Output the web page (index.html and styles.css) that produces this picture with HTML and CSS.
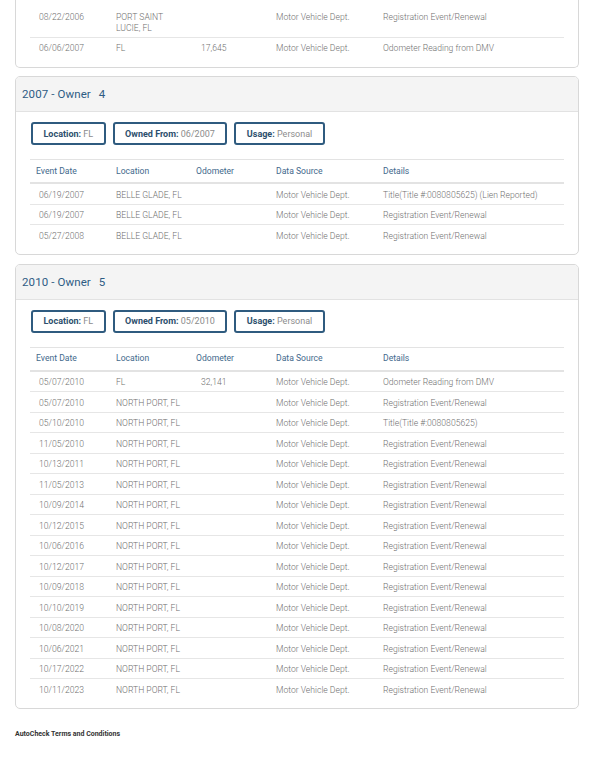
FILE: index.html
```html
<!DOCTYPE html>
<html>
<head>
<meta charset="utf-8">
<link rel="stylesheet" href="styles.css">
</head>
<body>
<div class="page">
  <section class="card card-cut">
    <div class="card-body card-body-cut">
      <table class="events">
        <colgroup><col class="c1"><col class="c2"><col class="c3"><col class="c4"><col class="c5"></colgroup>
        <tbody>
          <tr><td class="date">08/22/2006</td><td>PORT SAINT LUCIE, FL</td><td class="odo"></td><td>Motor Vehicle Dept.</td><td>Registration Event/Renewal</td></tr>
          <tr><td class="date">06/06/2007</td><td>FL</td><td class="odo">17,645</td><td>Motor Vehicle Dept.</td><td>Odometer Reading from DMV</td></tr>
        </tbody>
      </table>
    </div>
  </section>

  <section class="card">
    <header class="card-head"><h2 class="owner-title">2007 - Owner <span class="owner-num">4</span></h2></header>
    <div class="card-body">
      <div class="badges">
        <span class="badge"><b>Location:</b> FL</span>
        <span class="badge"><b>Owned From:</b> 06/2007</span>
        <span class="badge"><b>Usage:</b> Personal</span>
      </div>
      <table class="events">
        <colgroup><col class="c1"><col class="c2"><col class="c3"><col class="c4"><col class="c5"></colgroup>
        <thead><tr><th>Event Date</th><th>Location</th><th>Odometer</th><th>Data Source</th><th>Details</th></tr></thead>
        <tbody>
          <tr><td class="date">06/19/2007</td><td>BELLE GLADE, FL</td><td class="odo"></td><td>Motor Vehicle Dept.</td><td>Title(Title #:0080805625) (Lien Reported)</td></tr>
          <tr><td class="date">06/19/2007</td><td>BELLE GLADE, FL</td><td class="odo"></td><td>Motor Vehicle Dept.</td><td>Registration Event/Renewal</td></tr>
          <tr><td class="date">05/27/2008</td><td>BELLE GLADE, FL</td><td class="odo"></td><td>Motor Vehicle Dept.</td><td>Registration Event/Renewal</td></tr>
        </tbody>
      </table>
    </div>
  </section>

  <section class="card">
    <header class="card-head"><h2 class="owner-title">2010 - Owner <span class="owner-num">5</span></h2></header>
    <div class="card-body">
      <div class="badges">
        <span class="badge"><b>Location:</b> FL</span>
        <span class="badge"><b>Owned From:</b> 05/2010</span>
        <span class="badge"><b>Usage:</b> Personal</span>
      </div>
      <table class="events">
        <colgroup><col class="c1"><col class="c2"><col class="c3"><col class="c4"><col class="c5"></colgroup>
        <thead><tr><th>Event Date</th><th>Location</th><th>Odometer</th><th>Data Source</th><th>Details</th></tr></thead>
        <tbody>
          <tr><td class="date">05/07/2010</td><td>FL</td><td class="odo">32,141</td><td>Motor Vehicle Dept.</td><td>Odometer Reading from DMV</td></tr>
          <tr><td class="date">05/07/2010</td><td>NORTH PORT, FL</td><td class="odo"></td><td>Motor Vehicle Dept.</td><td>Registration Event/Renewal</td></tr>
          <tr><td class="date">05/10/2010</td><td>NORTH PORT, FL</td><td class="odo"></td><td>Motor Vehicle Dept.</td><td>Title(Title #:0080805625)</td></tr>
          <tr><td class="date">11/05/2010</td><td>NORTH PORT, FL</td><td class="odo"></td><td>Motor Vehicle Dept.</td><td>Registration Event/Renewal</td></tr>
          <tr><td class="date">10/13/2011</td><td>NORTH PORT, FL</td><td class="odo"></td><td>Motor Vehicle Dept.</td><td>Registration Event/Renewal</td></tr>
          <tr><td class="date">11/05/2013</td><td>NORTH PORT, FL</td><td class="odo"></td><td>Motor Vehicle Dept.</td><td>Registration Event/Renewal</td></tr>
          <tr><td class="date">10/09/2014</td><td>NORTH PORT, FL</td><td class="odo"></td><td>Motor Vehicle Dept.</td><td>Registration Event/Renewal</td></tr>
          <tr><td class="date">10/12/2015</td><td>NORTH PORT, FL</td><td class="odo"></td><td>Motor Vehicle Dept.</td><td>Registration Event/Renewal</td></tr>
          <tr><td class="date">10/06/2016</td><td>NORTH PORT, FL</td><td class="odo"></td><td>Motor Vehicle Dept.</td><td>Registration Event/Renewal</td></tr>
          <tr><td class="date">10/12/2017</td><td>NORTH PORT, FL</td><td class="odo"></td><td>Motor Vehicle Dept.</td><td>Registration Event/Renewal</td></tr>
          <tr><td class="date">10/09/2018</td><td>NORTH PORT, FL</td><td class="odo"></td><td>Motor Vehicle Dept.</td><td>Registration Event/Renewal</td></tr>
          <tr><td class="date">10/10/2019</td><td>NORTH PORT, FL</td><td class="odo"></td><td>Motor Vehicle Dept.</td><td>Registration Event/Renewal</td></tr>
          <tr><td class="date">10/08/2020</td><td>NORTH PORT, FL</td><td class="odo"></td><td>Motor Vehicle Dept.</td><td>Registration Event/Renewal</td></tr>
          <tr><td class="date">10/06/2021</td><td>NORTH PORT, FL</td><td class="odo"></td><td>Motor Vehicle Dept.</td><td>Registration Event/Renewal</td></tr>
          <tr><td class="date">10/17/2022</td><td>NORTH PORT, FL</td><td class="odo"></td><td>Motor Vehicle Dept.</td><td>Registration Event/Renewal</td></tr>
          <tr><td class="date">10/11/2023</td><td>NORTH PORT, FL</td><td class="odo"></td><td>Motor Vehicle Dept.</td><td>Registration Event/Renewal</td></tr>
        </tbody>
      </table>
    </div>
  </section>

  <p class="terms">AutoCheck Terms and Conditions</p>
</div>
</body>
</html>
```

FILE: styles.css
```css
* { box-sizing: border-box; }
html, body { margin: 0; padding: 0; background: #fff; }
body { font-family: Roboto, "Noto Sans", Arial, sans-serif; color: #666; }

.page { padding: 0 15px; }

.card {
  border: 1px solid #d8d8d8;
  border-radius: 5px;
  margin-bottom: 8.5px;
  background: #fff;
  overflow: hidden;
}
.card-cut {
  border-top: none;
  border-top-left-radius: 0;
  border-top-right-radius: 0;
}

.card-head {
  height: 35px;
  background: #f4f4f4;
  border-bottom: 1px solid #e2e2e2;
  display: flex;
  align-items: center;
  padding: 0 6px;
}
.owner-title {
  margin: 0;
  font-size: 11.5px;
  font-weight: 400;
  color: #2e5c84;
  letter-spacing: 0.1px;
}
.owner-num { margin-left: 5px; }

.card-body { padding: 10px 14px 9.5px; }
.card-body-cut { padding-top: 6px; }

.badges {
  display: flex;
  gap: 7px;
  margin-left: 1px;
  margin-bottom: 14px;
}
.badge {
  height: 23px;
  display: flex;
  align-items: center;
  padding: 0 10.5px;
  border: 2px solid #2f5b7f;
  border-radius: 3px;
  font-size: 9px;
  color: #8c8c8c;
  font-weight: 400;
  white-space: pre;
}
.badge b { color: #2c4f6d; font-weight: 700; }

.events {
  width: 100%;
  table-layout: fixed;
  border-collapse: collapse;
  font-size: 8.6px;
  line-height: 11px;
}
.events col.c1 { width: 80px; }
.events col.c2 { width: 80px; }
.events col.c3 { width: 80px; }
.events col.c4 { width: 107px; }
.events col.c5 { width: auto; }

.events th {
  text-align: left;
  font-weight: 400;
  color: #43698c;
  padding: 5.5px 6px;
  border-top: 1px solid #e3e3e3;
  border-bottom: 2px solid #e3e3e3;
}
.events td {
  padding: 5.5px 6px 3px;
  vertical-align: top;
  font-weight: 300;
  color: #6f6f6f;
  border-bottom: 1px solid #e6e6e6;
}
.events tbody tr:last-child td { border-bottom: none; }
.events td.date { padding-left: 9px; }
.events td.odo { padding-left: 11px; }

.terms {
  margin: 21px 0 0;
  font-size: 7px;
  line-height: 9px;
  font-weight: 700;
  color: #333;
}
```
